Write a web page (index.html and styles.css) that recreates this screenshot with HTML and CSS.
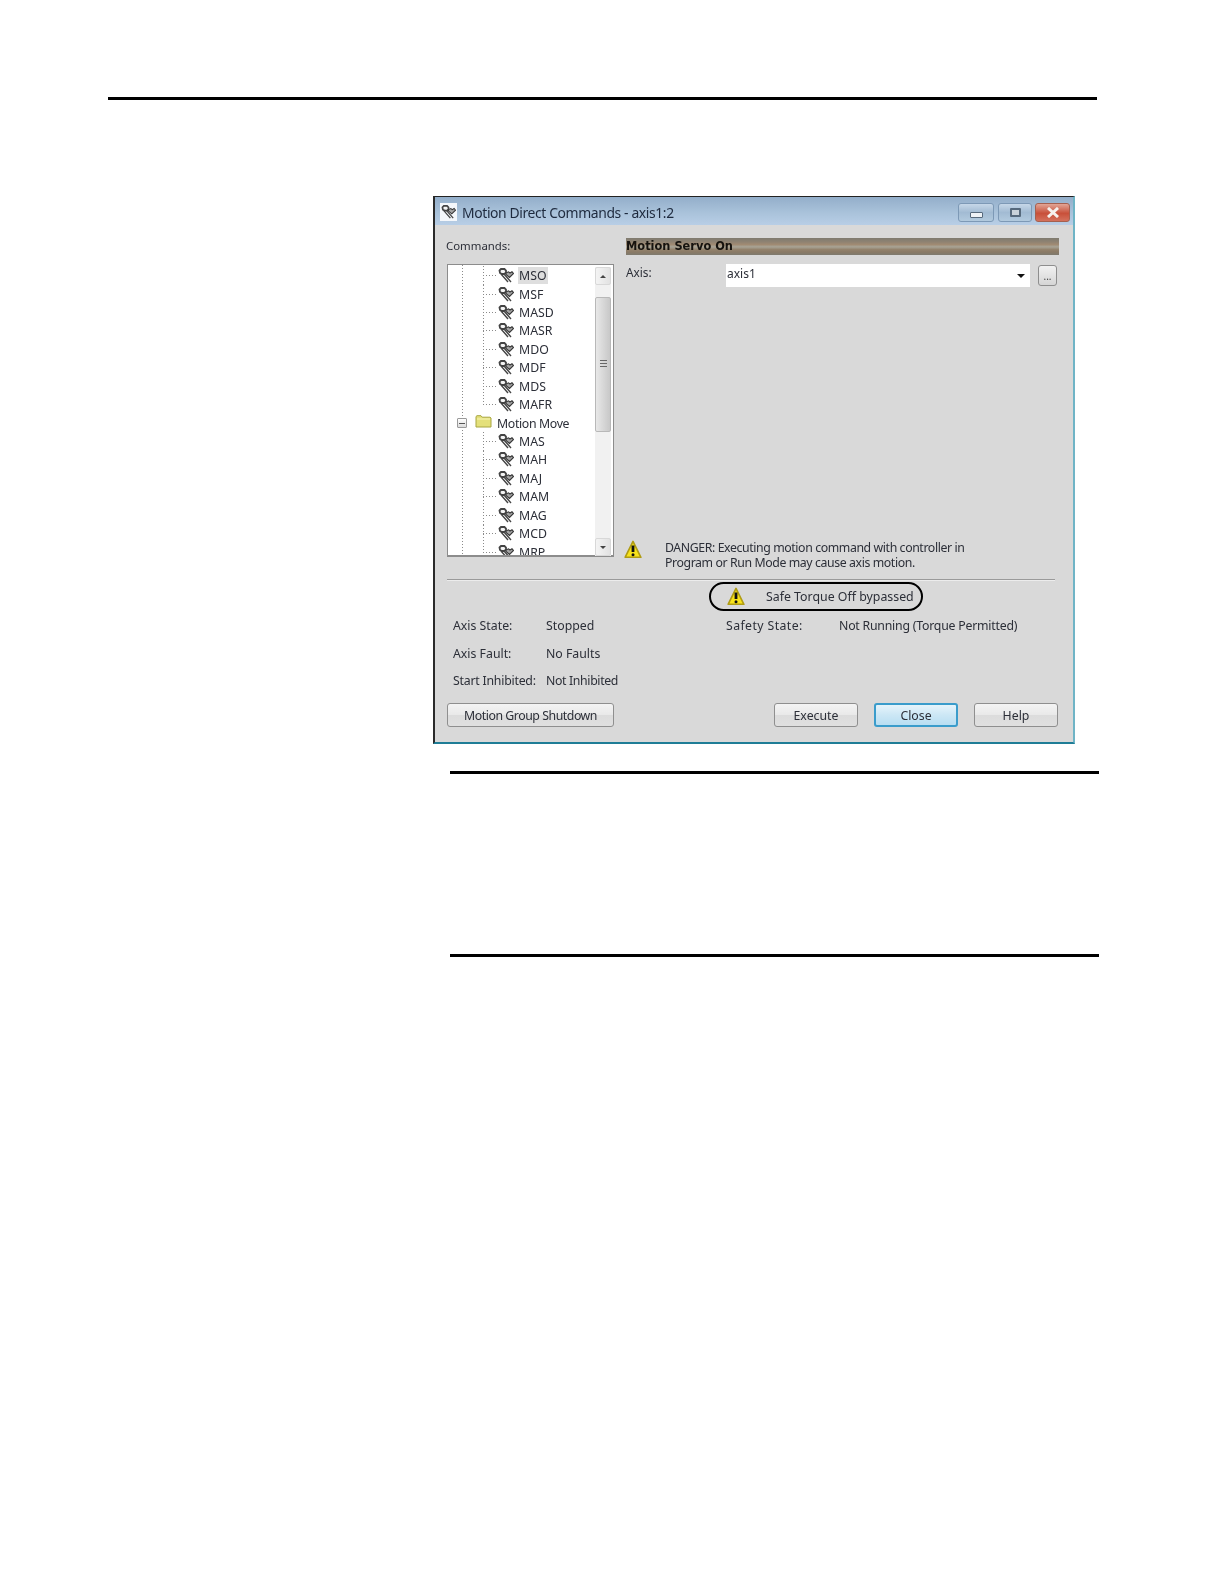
FILE: index.html
```html
<!DOCTYPE html>
<html lang="en">
<head>
<meta charset="utf-8">
<title>Motion Direct Commands</title>
<link rel="stylesheet" href="styles.css">
</head>
<body>
<svg class="defs" width="0" height="0" aria-hidden="true">
  <symbol id="motion" viewBox="0 0 16 15">
    <path d="M1.5 2.5 L3 1 H6.5 L8 2.5 V4.5 L6.5 6 H4 L2 5 Z" fill="#f4f4f4" stroke="#444" stroke-width="1.8"/>
    <path d="M8 5 L10.5 3.8 L12 5 L14 3.8 L15.5 5.5 L11.5 9.5 L8 6.5 Z" fill="#a5a5a5" stroke="#383838" stroke-width="1.1"/>
    <path d="M3 6 L10 14 M6 6 L13 14" stroke="#444" stroke-width="1.4" fill="none"/>
  </symbol>
  <symbol id="warn" viewBox="0 0 18 19">
    <path d="M9 1.4 L16.9 17.3 H1.1 Z" fill="#f8e31a" stroke="#b09c14" stroke-width="1.6" stroke-linejoin="round"/>
    <path d="M9 5.5 V12" stroke="#111" stroke-width="2.8"/>
    <circle cx="9" cy="14.7" r="1.5" fill="#111"/>
  </symbol>
</svg>

<div class="rule rule-top"></div>

<section class="dialog">
  <header class="titlebar">
    <svg class="app-icon"><use href="#motion"/></svg>
    <span class="title">Motion Direct Commands - axis1:2</span>
    <div class="win-controls">
      <button class="win win-min"><i class="min-glyph"></i></button>
      <button class="win win-max"><i class="max-glyph"></i></button>
      <button class="win win-close">
        <svg viewBox="0 0 14 11" width="14" height="11"><path d="M2 1 L12 10 M12 1 L2 10" stroke="#f6f2ee" stroke-width="3" fill="none"/></svg>
      </button>
    </div>
  </header>

  <div class="main">
    <div class="left">
      <div class="cmd-label">Commands:</div>
      <div class="tree">
        <ul class="tree-list">
          <li class="leaf"><svg class="mi"><use href="#motion"/></svg><span class="sel">MSO</span></li>
          <li class="leaf"><svg class="mi"><use href="#motion"/></svg><span>MSF</span></li>
          <li class="leaf"><svg class="mi"><use href="#motion"/></svg><span>MASD</span></li>
          <li class="leaf"><svg class="mi"><use href="#motion"/></svg><span>MASR</span></li>
          <li class="leaf"><svg class="mi"><use href="#motion"/></svg><span>MDO</span></li>
          <li class="leaf"><svg class="mi"><use href="#motion"/></svg><span>MDF</span></li>
          <li class="leaf"><svg class="mi"><use href="#motion"/></svg><span>MDS</span></li>
          <li class="leaf last"><svg class="mi"><use href="#motion"/></svg><span>MAFR</span></li>
          <li class="folder-row">
            <i class="expander"></i>
            <svg class="folder" viewBox="0 0 17 13"><path d="M1 3 V1.5 L2 .7 H6 L7.2 2.2 H15 L16 3 V12 H1 Z" fill="#e4e07a" stroke="#a8a640"/><path d="M2 4 H15" stroke="#f6f4b8"/></svg>
            <span class="group-name">Motion Move</span>
          </li>
          <li class="leaf"><svg class="mi"><use href="#motion"/></svg><span>MAS</span></li>
          <li class="leaf"><svg class="mi"><use href="#motion"/></svg><span>MAH</span></li>
          <li class="leaf"><svg class="mi"><use href="#motion"/></svg><span>MAJ</span></li>
          <li class="leaf"><svg class="mi"><use href="#motion"/></svg><span>MAM</span></li>
          <li class="leaf"><svg class="mi"><use href="#motion"/></svg><span>MAG</span></li>
          <li class="leaf"><svg class="mi"><use href="#motion"/></svg><span>MCD</span></li>
          <li class="leaf"><svg class="mi"><use href="#motion"/></svg><span>MRP</span></li>
        </ul>
        <div class="scrollbar">
          <div class="sb-btn"><i class="arrow-up"></i></div>
          <div class="sb-thumb"><i class="grip"></i></div>
          <div class="sb-track"></div>
          <div class="sb-btn"><i class="arrow-down"></i></div>
        </div>
      </div>
    </div>

    <div class="right">
      <div class="cmd-title">Motion Servo On</div>
      <div class="axis-row">
        <span class="axis-label">Axis:</span>
        <div class="combo"><span>axis1</span><i class="combo-arrow"></i></div>
        <button class="browse">...</button>
      </div>
      <div class="danger">
        <svg class="warn-icon"><use href="#warn"/></svg>
        <p>DANGER: Executing motion command with controller in<br>Program or Run Mode may cause axis motion.</p>
      </div>
    </div>
  </div>

  <div class="separator"></div>

  <div class="pill">
    <svg class="warn-icon"><use href="#warn"/></svg>
    <span>Safe Torque Off bypassed</span>
  </div>

  <div class="status">
    <span>Axis State:</span><span>Stopped</span><span class="wide">Safety State:</span><span class="tight">Not Running (Torque Permitted)</span>
    <span>Axis Fault:</span><span>No Faults</span><span></span><span></span>
    <span class="tight">Start Inhibited:</span><span class="tighter">Not Inhibited</span><span></span><span></span>
  </div>

  <div class="actions">
    <button class="btn btn-wide">Motion Group Shutdown</button>
    <button class="btn btn-exec">Execute</button>
    <button class="btn btn-close">Close</button>
    <button class="btn btn-help">Help</button>
  </div>
</section>

<div class="rule rule-note-top"></div>
<div class="rule rule-note-bottom"></div>
</body>
</html>
```

FILE: styles.css
```css
* { box-sizing: border-box; }

html, body { margin: 0; padding: 0; background: #fff; }

body {
  height: 1584px;
  overflow: hidden;
  font-family: "Noto Sans", "Liberation Sans", sans-serif;
  color: #2c2f38;
}

.defs { display: block; height: 0; }

.rule { height: 3px; background: #000; }
.rule-top { margin: 97px 0 0 108px; width: 989px; }
.rule-note-top { margin: 27px 0 0 450px; width: 649px; }
.rule-note-bottom { margin: 180px 0 0 450px; width: 649px; }

.dialog {
  margin: 96px 0 0 433px;
  width: 642px;
  height: 548px;
  background: #d9d9d9;
  border-style: solid;
  border-color: #222 #6fb4c6 #1f7d96 #2a2a2a;
  border-width: 1px 2px 2px 2px;
  font-size: 12.3px;
  filter: blur(0.4px);
}

/* title bar */
.titlebar {
  height: 28px;
  display: flex;
  align-items: flex-start;
  padding: 6px 3px 0 5px;
  background: linear-gradient(#93aeca, #a9c2da 55%, #b8cee6);
}
.app-icon {
  width: 17px;
  height: 18px;
  padding: 1px;
  background: #f4f7fb;
  flex: none;
}
.title {
  margin-left: 5px;
  font-size: 13.9px;
  letter-spacing: -0.38px;
  line-height: 19px;
  color: #1e2a3e;
}
.win-controls { margin-left: auto; display: flex; gap: 3px; }
.win {
  height: 19px;
  padding: 0;
  display: flex;
  align-items: center;
  justify-content: center;
  border: 1px solid #7d99b6;
  border-radius: 3px;
  background: linear-gradient(#c6d7e8, #a2bbd3 50%, #b2cade);
}
.win-min { width: 36px; margin-right: 1px; }
.win-max { width: 34px; }
.win-close {
  width: 35px;
  border-color: #a5604f;
  background: linear-gradient(#e2a595, #c8503a 55%, #d4715c);
}
.min-glyph {
  width: 13px;
  height: 6px;
  margin-top: 5px;
  background: #eef2f6;
  border: 1px solid #56697c;
  border-radius: 1px;
}
.max-glyph {
  width: 11px;
  height: 9px;
  background: #c9d2da;
  border: 2px solid #56697c;
  border-radius: 1px;
}

/* main area */
.main {
  display: flex;
  gap: 12px;
  padding-left: 12px;
  height: 346px;
}
.left { width: 167px; padding-top: 12px; }
.right { width: 433px; padding-top: 13px; }

.cmd-label {
  height: 27px;
  margin-left: -1px;
  line-height: 17px;
  font-size: 11.4px;
}

.tree {
  height: 293px;
  display: flex;
  background: #fff;
  border: 1px solid #8c8c8c;
  border-bottom-width: 2px;
  padding-right: 2px;
}
.tree-list {
  list-style: none;
  margin: 0;
  padding: 1.4px 0 0;
  width: 147px;
  overflow: hidden;
  background-image: repeating-linear-gradient(to bottom, #8a8a8a 0 1px, transparent 1px 3px);
  background-size: 1px 100%;
  background-position: 14px 0;
  background-repeat: no-repeat;
}
.tree-list li {
  height: 18.45px;
  display: flex;
  align-items: center;
  line-height: 17px;
}
.leaf {
  padding-left: 50px;
  background-image:
    repeating-linear-gradient(to bottom, #8a8a8a 0 1px, transparent 1px 3px),
    repeating-linear-gradient(to right, #8a8a8a 0 1px, transparent 1px 3px);
  background-size: 1px 100%, 13px 1px;
  background-position: 35px 0, 35px 50%;
  background-repeat: no-repeat;
}
.leaf.last { background-size: 1px 50%, 13px 1px; }
.mi { width: 16px; height: 15px; flex: none; margin-right: 5px; }
.sel {
  margin-left: -1px;
  padding: 0 1px;
  background: #dedede;
}
.folder-row { padding-left: 9px; }
.group-name { letter-spacing: -0.35px; }
.expander {
  width: 10px;
  height: 10px;
  flex: none;
  border: 1px solid #9a9a9a;
  border-radius: 1px;
  background:
    linear-gradient(#555, #555) center / 6px 1px no-repeat,
    linear-gradient(#fff, #dcdcdc);
}
.folder {
  width: 17px;
  height: 13px;
  flex: none;
  margin: -3px 5px 0 8px;
}

.scrollbar {
  width: 16px;
  height: 289px;
  margin-top: 2px;
  display: flex;
  flex-direction: column;
  background: #f1f1f1;
}
.sb-btn {
  height: 18px;
  flex: none;
  display: flex;
  align-items: center;
  justify-content: center;
  background: linear-gradient(to right, #f4f4f4, #e2e2e2);
  border: 1px solid #d8d8d8;
  border-radius: 2px;
}
.arrow-up, .arrow-down {
  width: 0;
  height: 0;
  border-left: 3.5px solid transparent;
  border-right: 3.5px solid transparent;
}
.arrow-up { border-bottom: 3.5px solid #444; }
.arrow-down { border-top: 3.5px solid #444; }
.sb-thumb {
  height: 135px;
  margin-top: 12px;
  flex: none;
  display: flex;
  align-items: center;
  justify-content: center;
  background: linear-gradient(to right, #e8e8e8, #d8d8d8 50%, #c8c8c8);
  border: 1px solid #b8b8b8;
  border-radius: 2px;
}
.grip {
  width: 7px;
  height: 9px;
  background: repeating-linear-gradient(to bottom, #666 0 1px, transparent 1px 3px);
}
.sb-track { flex: 1; }

.cmd-title {
  height: 17px;
  line-height: 16px;
  font-family: "DejaVu Sans", sans-serif;
  font-weight: 700;
  font-size: 11.4px;
  color: #15120e;
  background: linear-gradient(#7f7b70, #8e8272 22%, #a08a72 38%, #a8a496 52%, #93826c 68%, #8a7a66 82%, #7e7a6e);
}

.axis-row {
  margin-top: 9px;
  display: flex;
  align-items: flex-start;
}
.axis-label { width: 100px; line-height: 17px; font-size: 11.8px; }
.combo {
  width: 304px;
  height: 23px;
  padding: 0 5px 0 1px;
  display: flex;
  align-items: center;
  justify-content: space-between;
  background: #fff;
  line-height: 17px;
  font-size: 12px;
}
.combo span { margin-top: -5px; }
.combo-arrow {
  width: 0;
  height: 0;
  border-left: 4px solid transparent;
  border-right: 4px solid transparent;
  border-top: 4px solid #111;
}
.browse {
  width: 19px;
  height: 21px;
  margin: 1px 0 0 8px;
  padding: 0;
  font: inherit;
  font-size: 10px;
  line-height: 21px;
  color: #444;
  border: 1px solid #8e8e8e;
  border-radius: 3px;
  background: linear-gradient(#f2f2f2, #d5d5d5);
}

.danger {
  margin: 253px 0 0 -2px;
  display: flex;
  align-items: flex-start;
}
.warn-icon { width: 18px; height: 19px; flex: none; }
.danger .warn-icon { margin-top: 0; }
.danger p {
  margin: 0 0 0 23px;
  line-height: 15px;
  font-size: 12.3px;
  letter-spacing: -0.4px;
}

.separator {
  margin: 8px 0 0 12px;
  width: 608px;
  height: 2px;
  background: linear-gradient(#9a9a9a 50%, #ececec 50%);
}

.pill {
  margin: 1px 0 0 274px;
  width: 214px;
  height: 29px;
  display: flex;
  align-items: center;
  padding-left: 16px;
  border: 2px solid #000;
  border-radius: 15px;
  font-size: 12.35px;
}
.pill span { margin-left: 21px; }

.status {
  margin: 1px 0 0 18px;
  display: grid;
  grid-template-columns: 93px 180px 113px 1fr;
  grid-auto-rows: 27.5px;
  align-items: center;
  line-height: 17px;
}
.tight { letter-spacing: -0.22px; }
.tighter { letter-spacing: -0.35px; }
.wide { letter-spacing: 0.4px; }

.actions {
  margin-top: 8px;
  padding: 0 15px 0 12px;
  display: flex;
}
.btn {
  height: 24px;
  padding: 1px 0 0;
  font: inherit;
  font-size: 12.3px;
  color: #2c2f38;
  border: 1px solid #8f8f8f;
  border-radius: 3px;
  background: linear-gradient(#f4f4f4, #e9e9e9 48%, #dcdcdc 52%, #e0e0e0);
}
.btn-wide { width: 167px; margin-right: auto; letter-spacing: -0.45px; }
.btn-exec { width: 84px; }
.btn-close {
  width: 84px;
  margin-left: 16px;
  border: 2px solid #3a9ccb;
  background: linear-gradient(#e6f4fb, #cce7f5 50%, #b8def2);
}
.btn-help { width: 84px; margin-left: 16px; }
```
